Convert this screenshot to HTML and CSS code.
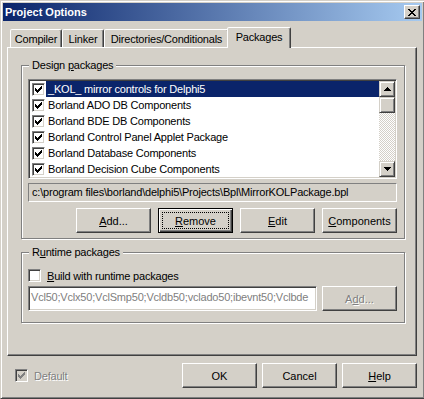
FILE: index.html
```html
<!DOCTYPE html>
<html lang="en">
<head>
    <meta charset="UTF-8">
    <meta name="viewport" content="width=device-width, initial-scale=1.0">
    <title>Project Options</title>
    <link rel="stylesheet" href="styles.css">
</head>
<body>

<div class="window">
    <div class="titlebar">
        <span class="title">Project Options</span>
        <span class="close-btn">
            <svg width="8" height="7" viewBox="0 0 8 7"><path d="M0 0h2v1h-2zM6 0h2v1h-2zM1 1h2v1h-2zM5 1h2v1h-2zM2 2h4v1h-4zM3 3h2v1h-2zM2 4h4v1h-4zM1 5h2v1h-2zM5 5h2v1h-2zM0 6h2v1h-2zM6 6h2v1h-2z"/></svg>
        </span>
    </div>

    <div class="client">
        <div class="tabs">
            <div class="tab tab-compiler">Compiler</div>
            <div class="tab tab-linker">Linker</div>
            <div class="tab tab-dirs">Directories/Conditionals</div>
            <div class="tab tab-packages active">Packages</div>
        </div>

        <div class="page">
            <fieldset class="group group-design">
                <legend>Design <u>p</u>ackages</legend>
                <div class="listbox">
                    <div class="list-items">
                        <div class="item selected">
                            <span class="check"><svg class="tick" width="7" height="7" viewBox="0 0 7 7"><path d="M6 0h1v1h-1zM5 1h2v1h-2zM0 2h1v1h-1zM4 2h3v1h-3zM0 3h2v1h-2zM3 3h3v1h-3zM0 4h5v1h-5zM1 5h3v1h-3zM2 6h1v1h-1z"/></svg></span>
                            <span class="item-text">_KOL_ mirror controls for Delphi5</span>
                        </div>
                        <div class="item">
                            <span class="check"><svg class="tick" width="7" height="7" viewBox="0 0 7 7"><path d="M6 0h1v1h-1zM5 1h2v1h-2zM0 2h1v1h-1zM4 2h3v1h-3zM0 3h2v1h-2zM3 3h3v1h-3zM0 4h5v1h-5zM1 5h3v1h-3zM2 6h1v1h-1z"/></svg></span>
                            <span class="item-text">Borland ADO DB Components</span>
                        </div>
                        <div class="item">
                            <span class="check"><svg class="tick" width="7" height="7" viewBox="0 0 7 7"><path d="M6 0h1v1h-1zM5 1h2v1h-2zM0 2h1v1h-1zM4 2h3v1h-3zM0 3h2v1h-2zM3 3h3v1h-3zM0 4h5v1h-5zM1 5h3v1h-3zM2 6h1v1h-1z"/></svg></span>
                            <span class="item-text">Borland BDE DB Components</span>
                        </div>
                        <div class="item">
                            <span class="check"><svg class="tick" width="7" height="7" viewBox="0 0 7 7"><path d="M6 0h1v1h-1zM5 1h2v1h-2zM0 2h1v1h-1zM4 2h3v1h-3zM0 3h2v1h-2zM3 3h3v1h-3zM0 4h5v1h-5zM1 5h3v1h-3zM2 6h1v1h-1z"/></svg></span>
                            <span class="item-text">Borland Control Panel Applet Package</span>
                        </div>
                        <div class="item">
                            <span class="check"><svg class="tick" width="7" height="7" viewBox="0 0 7 7"><path d="M6 0h1v1h-1zM5 1h2v1h-2zM0 2h1v1h-1zM4 2h3v1h-3zM0 3h2v1h-2zM3 3h3v1h-3zM0 4h5v1h-5zM1 5h3v1h-3zM2 6h1v1h-1z"/></svg></span>
                            <span class="item-text">Borland Database Components</span>
                        </div>
                        <div class="item">
                            <span class="check"><svg class="tick" width="7" height="7" viewBox="0 0 7 7"><path d="M6 0h1v1h-1zM5 1h2v1h-2zM0 2h1v1h-1zM4 2h3v1h-3zM0 3h2v1h-2zM3 3h3v1h-3zM0 4h5v1h-5zM1 5h3v1h-3zM2 6h1v1h-1z"/></svg></span>
                            <span class="item-text">Borland Decision Cube Components</span>
                        </div>
                    </div>
                    <div class="scrollbar">
                        <div class="sb-btn"><svg width="7" height="4" viewBox="0 0 7 4"><path d="M3 0h1v1h-1zM2 1h3v1h-3zM1 2h5v1h-5zM0 3h7v1h-7z"/></svg></div>
                        <div class="sb-thumb"></div>
                        <div class="sb-track"></div>
                        <div class="sb-btn"><svg width="7" height="4" viewBox="0 0 7 4"><path d="M0 0h7v1h-7zM1 1h5v1h-5zM2 2h3v1h-3zM3 3h1v1h-1z"/></svg></div>
                    </div>
                </div>
                <div class="path-field">c:\program files\borland\delphi5\Projects\Bpl\MirrorKOLPackage.bpl</div>
                <div class="btn-row">
                    <button class="btn"><u>A</u>dd...</button>
                    <button class="btn default"><span class="focus"><u>R</u>emove</span></button>
                    <button class="btn"><u>E</u>dit</button>
                    <button class="btn"><u>C</u>omponents</button>
                </div>
            </fieldset>

            <fieldset class="group group-runtime">
                <legend>R<u>u</u>ntime packages</legend>
                <div class="check-row">
                    <span class="check"></span>
                    <span class="check-label"><u>B</u>uild with runtime packages</span>
                </div>
                <div class="edit-row">
                    <div class="edit disabled">Vcl50;Vclx50;VclSmp50;Vcldb50;vclado50;ibevnt50;Vclbde</div>
                    <button class="btn disabled">A<u>d</u>d...</button>
                </div>
            </fieldset>
        </div>

        <div class="footer">
            <div class="check-row disabled">
                <span class="check"><svg class="tick" width="7" height="7" viewBox="0 0 7 7"><path d="M6 0h1v1h-1zM5 1h2v1h-2zM0 2h1v1h-1zM4 2h3v1h-3zM0 3h2v1h-2zM3 3h3v1h-3zM0 4h5v1h-5zM1 5h3v1h-3zM2 6h1v1h-1z"/></svg></span>
                <span class="check-label">Default</span>
            </div>
            <div class="footer-buttons">
                <button class="btn">OK</button>
                <button class="btn">Cancel</button>
                <button class="btn"><u>H</u>elp</button>
            </div>
        </div>
    </div>
</div>

</body>
</html>
```

FILE: styles.css
```css
* {
    box-sizing: border-box;
}
body {
    margin: 0;
    background-color: #d4d0c8;
    font-family: "Liberation Sans", Arial, sans-serif;
    font-size: 11px;
    letter-spacing: -0.2px;
    color: #000;
    overflow: hidden;
}
u {
    text-decoration-thickness: 1px;
    text-underline-offset: 1px;
}

/* window frame */
.window {
    width: 425px;
    height: 399px;
    padding: 2px;
    background-color: #d4d0c8;
    border: 1px solid;
    border-color: #d4d0c8 #404040 #404040 #d4d0c8;
    box-shadow: inset 1px 1px #fff, inset -1px -1px #808080;
}
.titlebar {
    height: 18px;
    display: flex;
    align-items: center;
    justify-content: space-between;
    padding: 0 2px;
    background: linear-gradient(to right, #0a246a, #a6caf0);
    color: #fff;
    font-weight: bold;
    letter-spacing: 0;
}
.close-btn {
    width: 16px;
    height: 14px;
    display: flex;
    align-items: center;
    justify-content: center;
    background-color: #d4d0c8;
    border: 1px solid;
    border-color: #fff #404040 #404040 #fff;
    box-shadow: inset -1px -1px #808080;
}
.client {
    padding: 6px 5px 0 4px;
}

/* tabs */
.tabs {
    display: flex;
    align-items: flex-end;
    height: 20px;
    padding-left: 3px;
}
.tab {
    height: 18px;
    display: flex;
    align-items: center;
    justify-content: center;
    padding-top: 1px;
    background-color: #d4d0c8;
    border: 1px solid;
    border-bottom: 0;
    border-color: #fff #404040 transparent #fff;
    border-radius: 2px 2px 0 0;
    box-shadow: inset -1px 0 #808080;
}
.tab-compiler { width: 52px; }
.tab-linker { width: 42px; }
.tab-dirs { width: 125px; }
.tab-packages { width: 64px; }
.tab.active {
    height: 21px;
    margin: 0 -2px -1px;
    padding-top: 0;
    padding-bottom: 2px;
    position: relative;
    z-index: 1;
}

/* page */
.page {
    width: 410px;
    height: 309px;
    padding: 11px 0 0 13px;
    border: 1px solid;
    border-color: #fff #404040 #404040 #fff;
    box-shadow: inset -1px -1px #808080;
}
.group {
    width: 384px;
    margin: 0;
    min-width: 0;
    border: 1px solid #808080;
    box-shadow: inset 1px 1px #fff, 1px 1px #fff;
}
.group legend {
    margin-left: 1px;
    padding: 0 3px;
    line-height: 13px;
    background-color: #d4d0c8;
}
.group-design {
    padding: 7px 7px 5px 6px;
}
.group-runtime {
    margin-top: 7px;
    padding: 8px 7px 11px 6px;
}

/* list box */
.listbox {
    height: 100px;
    display: flex;
    padding: 1px;
    background-color: #fff;
    border: 1px solid;
    border-color: #808080 #fff #fff #808080;
    box-shadow: inset 1px 1px #404040, inset -1px -1px #d4d0c8;
}
.list-items {
    flex: 1;
    overflow: hidden;
}
.item {
    height: 16px;
    display: flex;
    align-items: center;
    padding-left: 2px;
    white-space: nowrap;
}
.item-text {
    flex: 1;
    height: 16px;
    line-height: 16px;
    margin-left: 1px;
    padding-left: 2px;
}
.item.selected .item-text {
    background-color: #0a246a;
    color: #fff;
}
.scrollbar {
    width: 16px;
    display: flex;
    flex-direction: column;
}
.sb-btn,
.sb-thumb {
    height: 16px;
    display: flex;
    align-items: center;
    justify-content: center;
    background-color: #d4d0c8;
    border: 1px solid;
    border-color: #d4d0c8 #404040 #404040 #d4d0c8;
    box-shadow: inset 1px 1px #fff, inset -1px -1px #808080;
}
.sb-track {
    flex: 1;
    background: repeating-conic-gradient(#fff 0 25%, #d4d0c8 0 50%) 0 0 / 2px 2px;
}

/* check boxes */
.check {
    width: 13px;
    height: 13px;
    flex-shrink: 0;
    display: flex;
    align-items: center;
    justify-content: center;
    background-color: #fff;
    border: 1px solid;
    border-color: #808080 #fff #fff #808080;
    box-shadow: inset 1px 1px #404040, inset -1px -1px #d4d0c8;
}
.check-row {
    height: 17px;
    display: flex;
    align-items: center;
}
.check-label {
    margin-left: 6px;
}
.check-row.disabled .check {
    background-color: #d4d0c8;
}
.check-row.disabled .tick {
    fill: #808080;
}
.check-row.disabled .check-label {
    color: #808080;
    text-shadow: 1px 1px #fff;
}

/* edits */
.path-field {
    height: 19px;
    margin-top: 4px;
    padding-left: 3px;
    line-height: 17px;
    white-space: nowrap;
    overflow: hidden;
    border: 1px solid;
    border-color: #808080 #fff #fff #808080;
}
.edit-row {
    display: flex;
    justify-content: space-between;
    margin-top: 2px;
}
.edit {
    width: 289px;
    height: 25px;
    padding: 0 2px;
    line-height: 21px;
    white-space: nowrap;
    overflow: hidden;
    background-color: #fff;
    border: 1px solid;
    border-color: #808080 #fff #fff #808080;
    box-shadow: inset 1px 1px #404040, inset -1px -1px #d4d0c8;
}
.edit.disabled {
    color: #808080;
}

/* buttons */
.btn {
    width: 75px;
    height: 25px;
    padding: 0;
    font: inherit;
    color: #000;
    background-color: #d4d0c8;
    border: 1px solid;
    border-color: #fff #404040 #404040 #fff;
    box-shadow: inset -1px -1px #808080;
    display: flex;
    align-items: center;
    justify-content: center;
}
.btn.default {
    padding: 3px;
    border-color: #000;
    box-shadow: inset 1px 1px #fff, inset -1px -1px #404040, inset -2px -2px #808080;
}
.btn .focus {
    flex: 1;
    align-self: stretch;
    display: flex;
    align-items: center;
    justify-content: center;
    border: 1px dotted #000;
}
.btn.disabled {
    color: #808080;
    text-shadow: 1px 1px #fff;
}
.btn-row {
    display: flex;
    justify-content: flex-end;
    gap: 7px;
    margin-top: 6px;
}

/* bottom row */
.footer {
    width: 410px;
    display: flex;
    align-items: center;
    justify-content: space-between;
    margin-top: 7px;
    padding-left: 8px;
}
.footer-buttons {
    display: flex;
    gap: 5px;
}
```
